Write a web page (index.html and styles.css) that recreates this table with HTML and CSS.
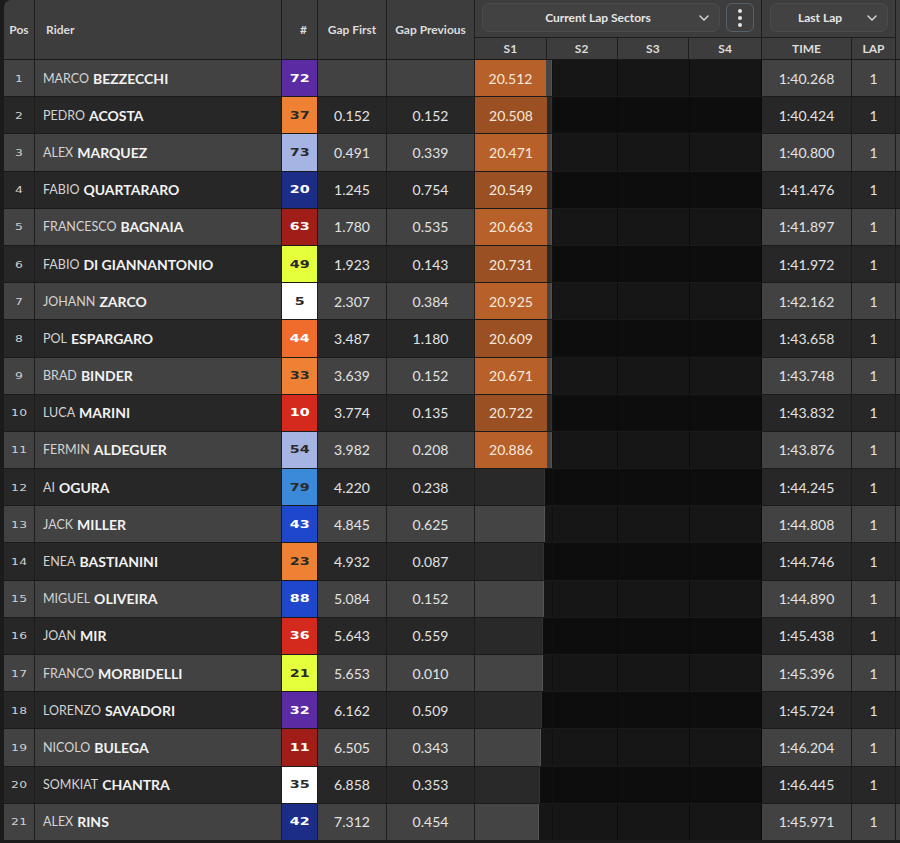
FILE: index.html
```html
<!DOCTYPE html>
<html>
<head>
<meta charset="utf-8">
<link rel="stylesheet" href="styles.css">
</head>
<body>
<div class="board">
  <div class="head">
    <div class="h pos">Pos</div>
    <div class="h rider">Rider</div>
    <div class="h num">#</div>
    <div class="h gapf">Gap First</div>
    <div class="h gapp">Gap Previous</div>
    <div class="hgroup sectors">
      <div class="htop">
        <div class="select sel-sec">Current Lap Sectors
          <svg class="chev" width="10" height="6" viewBox="0 0 10 6"><path d="M1 1l4 4 4-4" fill="none" stroke="#ddd" stroke-width="1.4" stroke-linecap="round" stroke-linejoin="round"/></svg>
        </div>
        <div class="kebab"><span></span><span></span><span></span></div>
      </div>
      <div class="hsub">
        <div class="sh w72">S1</div>
        <div class="sh w71">S2</div>
        <div class="sh w72">S3</div>
        <div class="sh w72">S4</div>
      </div>
    </div>
    <div class="hgroup laps">
      <div class="htop">
        <div class="select sel-lap">Last Lap
          <svg class="chev" width="10" height="6" viewBox="0 0 10 6"><path d="M1 1l4 4 4-4" fill="none" stroke="#ddd" stroke-width="1.4" stroke-linecap="round" stroke-linejoin="round"/></svg>
        </div>
      </div>
      <div class="hsub">
        <div class="sh w90">TIME</div>
        <div class="sh w43">LAP</div>
      </div>
    </div>
    <div class="h tail"></div>
  </div>

  <div class="rows">
    <div class="row"><div class="c pos"><span class="dg">1</span></div><div class="c rider"><span class="fn">MARCO</span><span class="ln">BEZZECCHI</span></div><div class="c num purple"><span class="dg">72</span></div><div class="c gapf"></div><div class="c gapp"></div><div class="c s1"><div class="bar" style="width:78px"><div class="fill" style="width:71px">20.512</div></div></div><div class="c sec s2"></div><div class="c sec"></div><div class="c sec"></div><div class="c time">1:40.268</div><div class="c lap">1</div><div class="c tail"></div></div>
    <div class="row"><div class="c pos"><span class="dg">2</span></div><div class="c rider"><span class="fn">PEDRO</span><span class="ln">ACOSTA</span></div><div class="c num orange dark"><span class="dg">37</span></div><div class="c gapf">0.152</div><div class="c gapp">0.152</div><div class="c s1"><div class="bar" style="width:78px"><div class="fill" style="width:72px">20.508</div></div></div><div class="c sec s2"></div><div class="c sec"></div><div class="c sec"></div><div class="c time">1:40.424</div><div class="c lap">1</div><div class="c tail"></div></div>
    <div class="row"><div class="c pos"><span class="dg">3</span></div><div class="c rider"><span class="fn">ALEX</span><span class="ln">MARQUEZ</span></div><div class="c num lav dark"><span class="dg">73</span></div><div class="c gapf">0.491</div><div class="c gapp">0.339</div><div class="c s1"><div class="bar" style="width:78px"><div class="fill" style="width:72px">20.471</div></div></div><div class="c sec s2"></div><div class="c sec"></div><div class="c sec"></div><div class="c time">1:40.800</div><div class="c lap">1</div><div class="c tail"></div></div>
    <div class="row"><div class="c pos"><span class="dg">4</span></div><div class="c rider"><span class="fn">FABIO</span><span class="ln">QUARTARARO</span></div><div class="c num navy"><span class="dg">20</span></div><div class="c gapf">1.245</div><div class="c gapp">0.754</div><div class="c s1"><div class="bar" style="width:78px"><div class="fill" style="width:72px">20.549</div></div></div><div class="c sec s2"></div><div class="c sec"></div><div class="c sec"></div><div class="c time">1:41.476</div><div class="c lap">1</div><div class="c tail"></div></div>
    <div class="row"><div class="c pos"><span class="dg">5</span></div><div class="c rider"><span class="fn">FRANCESCO</span><span class="ln">BAGNAIA</span></div><div class="c num maroon"><span class="dg">63</span></div><div class="c gapf">1.780</div><div class="c gapp">0.535</div><div class="c s1"><div class="bar" style="width:78px"><div class="fill" style="width:72px">20.663</div></div></div><div class="c sec s2"></div><div class="c sec"></div><div class="c sec"></div><div class="c time">1:41.897</div><div class="c lap">1</div><div class="c tail"></div></div>
    <div class="row"><div class="c pos"><span class="dg">6</span></div><div class="c rider"><span class="fn">FABIO</span><span class="ln">DI GIANNANTONIO</span></div><div class="c num lime dark"><span class="dg">49</span></div><div class="c gapf">1.923</div><div class="c gapp">0.143</div><div class="c s1"><div class="bar" style="width:78px"><div class="fill" style="width:72px">20.731</div></div></div><div class="c sec s2"></div><div class="c sec"></div><div class="c sec"></div><div class="c time">1:41.972</div><div class="c lap">1</div><div class="c tail"></div></div>
    <div class="row"><div class="c pos"><span class="dg">7</span></div><div class="c rider"><span class="fn">JOHANN</span><span class="ln">ZARCO</span></div><div class="c num white dark"><span class="dg">5</span></div><div class="c gapf">2.307</div><div class="c gapp">0.384</div><div class="c s1"><div class="bar" style="width:78px"><div class="fill" style="width:72px">20.925</div></div></div><div class="c sec s2"></div><div class="c sec"></div><div class="c sec"></div><div class="c time">1:42.162</div><div class="c lap">1</div><div class="c tail"></div></div>
    <div class="row"><div class="c pos"><span class="dg">8</span></div><div class="c rider"><span class="fn">POL</span><span class="ln">ESPARGARO</span></div><div class="c num orange2"><span class="dg">44</span></div><div class="c gapf">3.487</div><div class="c gapp">1.180</div><div class="c s1"><div class="bar" style="width:78px"><div class="fill" style="width:72px">20.609</div></div></div><div class="c sec s2"></div><div class="c sec"></div><div class="c sec"></div><div class="c time">1:43.658</div><div class="c lap">1</div><div class="c tail"></div></div>
    <div class="row"><div class="c pos"><span class="dg">9</span></div><div class="c rider"><span class="fn">BRAD</span><span class="ln">BINDER</span></div><div class="c num orange dark"><span class="dg">33</span></div><div class="c gapf">3.639</div><div class="c gapp">0.152</div><div class="c s1"><div class="bar" style="width:78px"><div class="fill" style="width:72px">20.671</div></div></div><div class="c sec s2"></div><div class="c sec"></div><div class="c sec"></div><div class="c time">1:43.748</div><div class="c lap">1</div><div class="c tail"></div></div>
    <div class="row"><div class="c pos"><span class="dg">10</span></div><div class="c rider"><span class="fn">LUCA</span><span class="ln">MARINI</span></div><div class="c num red"><span class="dg">10</span></div><div class="c gapf">3.774</div><div class="c gapp">0.135</div><div class="c s1"><div class="bar" style="width:78px"><div class="fill" style="width:72px">20.722</div></div></div><div class="c sec s2"></div><div class="c sec"></div><div class="c sec"></div><div class="c time">1:43.832</div><div class="c lap">1</div><div class="c tail"></div></div>
    <div class="row"><div class="c pos"><span class="dg">11</span></div><div class="c rider"><span class="fn">FERMIN</span><span class="ln">ALDEGUER</span></div><div class="c num lav dark"><span class="dg">54</span></div><div class="c gapf">3.982</div><div class="c gapp">0.208</div><div class="c s1"><div class="bar" style="width:78px"><div class="fill" style="width:72px">20.886</div></div></div><div class="c sec s2"></div><div class="c sec"></div><div class="c sec"></div><div class="c time">1:43.876</div><div class="c lap">1</div><div class="c tail"></div></div>
    <div class="row"><div class="c pos"><span class="dg">12</span></div><div class="c rider"><span class="fn">AI</span><span class="ln">OGURA</span></div><div class="c num sky dark"><span class="dg">79</span></div><div class="c gapf">4.220</div><div class="c gapp">0.238</div><div class="c s1"><div class="bar" style="width:70px"></div></div><div class="c sec s2"></div><div class="c sec"></div><div class="c sec"></div><div class="c time">1:44.245</div><div class="c lap">1</div><div class="c tail"></div></div>
    <div class="row"><div class="c pos"><span class="dg">13</span></div><div class="c rider"><span class="fn">JACK</span><span class="ln">MILLER</span></div><div class="c num blue"><span class="dg">43</span></div><div class="c gapf">4.845</div><div class="c gapp">0.625</div><div class="c s1"><div class="bar" style="width:70px"></div></div><div class="c sec s2"></div><div class="c sec"></div><div class="c sec"></div><div class="c time">1:44.808</div><div class="c lap">1</div><div class="c tail"></div></div>
    <div class="row"><div class="c pos"><span class="dg">14</span></div><div class="c rider"><span class="fn">ENEA</span><span class="ln">BASTIANINI</span></div><div class="c num orange dark"><span class="dg">23</span></div><div class="c gapf">4.932</div><div class="c gapp">0.087</div><div class="c s1"><div class="bar" style="width:69px"></div></div><div class="c sec s2"></div><div class="c sec"></div><div class="c sec"></div><div class="c time">1:44.746</div><div class="c lap">1</div><div class="c tail"></div></div>
    <div class="row"><div class="c pos"><span class="dg">15</span></div><div class="c rider"><span class="fn">MIGUEL</span><span class="ln">OLIVEIRA</span></div><div class="c num blue"><span class="dg">88</span></div><div class="c gapf">5.084</div><div class="c gapp">0.152</div><div class="c s1"><div class="bar" style="width:69px"></div></div><div class="c sec s2"></div><div class="c sec"></div><div class="c sec"></div><div class="c time">1:44.890</div><div class="c lap">1</div><div class="c tail"></div></div>
    <div class="row"><div class="c pos"><span class="dg">16</span></div><div class="c rider"><span class="fn">JOAN</span><span class="ln">MIR</span></div><div class="c num red"><span class="dg">36</span></div><div class="c gapf">5.643</div><div class="c gapp">0.559</div><div class="c s1"><div class="bar" style="width:68px"></div></div><div class="c sec s2"></div><div class="c sec"></div><div class="c sec"></div><div class="c time">1:45.438</div><div class="c lap">1</div><div class="c tail"></div></div>
    <div class="row"><div class="c pos"><span class="dg">17</span></div><div class="c rider"><span class="fn">FRANCO</span><span class="ln">MORBIDELLI</span></div><div class="c num lime dark"><span class="dg">21</span></div><div class="c gapf">5.653</div><div class="c gapp">0.010</div><div class="c s1"><div class="bar" style="width:68px"></div></div><div class="c sec s2"></div><div class="c sec"></div><div class="c sec"></div><div class="c time">1:45.396</div><div class="c lap">1</div><div class="c tail"></div></div>
    <div class="row"><div class="c pos"><span class="dg">18</span></div><div class="c rider"><span class="fn">LORENZO</span><span class="ln">SAVADORI</span></div><div class="c num purple"><span class="dg">32</span></div><div class="c gapf">6.162</div><div class="c gapp">0.509</div><div class="c s1"><div class="bar" style="width:67px"></div></div><div class="c sec s2"></div><div class="c sec"></div><div class="c sec"></div><div class="c time">1:45.724</div><div class="c lap">1</div><div class="c tail"></div></div>
    <div class="row"><div class="c pos"><span class="dg">19</span></div><div class="c rider"><span class="fn">NICOLO</span><span class="ln">BULEGA</span></div><div class="c num maroon"><span class="dg">11</span></div><div class="c gapf">6.505</div><div class="c gapp">0.343</div><div class="c s1"><div class="bar" style="width:66px"></div></div><div class="c sec s2"></div><div class="c sec"></div><div class="c sec"></div><div class="c time">1:46.204</div><div class="c lap">1</div><div class="c tail"></div></div>
    <div class="row"><div class="c pos"><span class="dg">20</span></div><div class="c rider"><span class="fn">SOMKIAT</span><span class="ln">CHANTRA</span></div><div class="c num white dark"><span class="dg">35</span></div><div class="c gapf">6.858</div><div class="c gapp">0.353</div><div class="c s1"><div class="bar" style="width:65px"></div></div><div class="c sec s2"></div><div class="c sec"></div><div class="c sec"></div><div class="c time">1:46.445</div><div class="c lap">1</div><div class="c tail"></div></div>
    <div class="row"><div class="c pos"><span class="dg">21</span></div><div class="c rider"><span class="fn">ALEX</span><span class="ln">RINS</span></div><div class="c num navy"><span class="dg">42</span></div><div class="c gapf">7.312</div><div class="c gapp">0.454</div><div class="c s1"><div class="bar" style="width:64px"></div></div><div class="c sec s2"></div><div class="c sec"></div><div class="c sec"></div><div class="c time">1:45.971</div><div class="c lap">1</div><div class="c tail"></div></div>
  </div>
</div>
</body>
</html>
```

FILE: styles.css
```css
* { box-sizing: border-box; }
html, body { margin: 0; padding: 0; }
body {
  background: #1b1b1b;
  font-family: "Lato", "Open Sans", sans-serif;
  color: #e4e4e4;
  width: 900px;
  height: 843px;
  overflow: hidden;
}
.board {
  margin-left: 4px;
  width: 896px;
  border-top-left-radius: 7px;
  overflow: hidden;
  background: #1b1b1b;
}

/* ---------- header ---------- */
.head {
  display: flex;
  height: 60px;
  background: #3d3d3d;
  border-bottom: 1px solid #1a1a1a;
}
.h {
  display: flex;
  align-items: center;
  font-size: 12px;
  font-weight: 700;
  color: #dcdcdc;
  border-right: 1px solid #1e1e1e;
}
.pos { width: 31px; justify-content: center; }
.rider { width: 247px; }
.h.rider { padding-left: 11px; }
.num { width: 36px; }
.h.num { justify-content: flex-end; padding-right: 10px; }
.gapf { width: 69px; justify-content: center; }
.gapp { width: 88px; justify-content: center; }
.tail { width: 5px; border-right: none; }
.h.tail { border-left: 1px solid #1e1e1e; border-right: none; }

.hgroup {
  display: flex;
  flex-direction: column;
  border-right: 1px solid #1e1e1e;
}
.sectors { width: 287px; }
.laps { width: 133px; border-right: none; }
.htop {
  height: 38px;
  border-bottom: 1px solid #1e1e1e;
  display: flex;
  align-items: flex-start;
  padding-top: 3px;
}
.sectors .htop { padding-left: 7px; gap: 6px; }
.laps .htop { padding-left: 8px; }
.select {
  position: relative;
  height: 29px;
  border: 1px solid #4c4c4c;
  border-radius: 7px;
  background: #424242;
  display: flex;
  align-items: center;
  justify-content: center;
  font-size: 12px;
  font-weight: 700;
  color: #e6e6e6;
}
.sel-sec { width: 238px; padding-right: 6px; }
.sel-lap { width: 118px; padding-right: 18px; }
.chev { position: absolute; right: 10px; top: 11px; }
.kebab {
  width: 28px;
  height: 29px;
  border: 1px solid #56606b;
  border-radius: 6px;
  background: #3f3f3f;
  display: flex;
  flex-direction: column;
  align-items: center;
  justify-content: center;
  gap: 3px;
}
.kebab span {
  width: 4px;
  height: 4px;
  border-radius: 50%;
  background: #e6e6e6;
}
.hsub { display: flex; height: 21px; }
.sh {
  display: flex;
  align-items: center;
  justify-content: center;
  font-size: 12px;
  font-weight: 700;
  color: #dcdcdc;
  border-right: 1px solid #1e1e1e;
}
.sh:last-child { border-right: none; }
.w72 { width: 72px; }
.w71 { width: 71px; }
.w90 { width: 90px; }
.w43 { width: 43px; border-right: none; }
.laps .sh.w90 { border-right: 1px solid #1e1e1e; }

/* ---------- rows ---------- */
.row {
  display: flex;
  height: 37.2px;
  background: #424242;
  border-bottom: 1px solid #1a1a1a;
}
.row:nth-child(even) { background: #272727; }
.c {
  display: flex;
  align-items: center;
  border-right: 1px solid #1d1d1d;
  font-size: 14px;
  color: #e2e2e2;
}
.c.pos { justify-content: center; }
.c.rider { padding-left: 8px; }
.fn { font-size: 12.5px; font-weight: 400; color: #d4d4d4; }
.ln { font-size: 14px; font-weight: 700; color: #f2f2f2; margin-left: 4px; }
.dg {
  display: inline-block;
  font-family: "DejaVu Sans", sans-serif;
  font-weight: 700;
  transform: scaleX(1.3);
}
.c.pos .dg { font-size: 9.5px; font-weight: 400; color: #cfcfcf; letter-spacing: 0.3px; }
.c.num { justify-content: center; }
.c.num .dg { font-size: 11px; color: #fff; letter-spacing: 0.2px; }
.c.num.dark .dg { color: #2a2a2a; }
.purple { background: #5a2ba3; }
.orange { background: #ef8134; }
.orange2 { background: #f06c2c; }
.lav { background: #a5b4e2; }
.navy { background: #1c2d88; }
.maroon { background: #a01d18; }
.lime { background: #e6ff3c; }
.white { background: #ffffff; }
.red { background: #d42a1e; }
.sky { background: #3b8ad9; }
.blue { background: #1f47cc; }

.c.gapf, .c.gapp { justify-content: center; }
.c.s1 {
  width: 78px;
  background: #161616;
  align-items: stretch;
  border-right: 1px solid #101010;
}
.row:nth-child(even) .c.s1 { background: #0d0d0d; }
.bar {
  background: #444444;
  border-right: 1px solid #555;
  display: flex;
  align-items: stretch;
}
.row:nth-child(even) .bar { background: #292929; border-right-color: #333; }
.fill {
  background: #b8602a;
  display: flex;
  align-items: center;
  justify-content: center;
  color: #f6e9dc;
  font-size: 14px;
}
.row:nth-child(even) .fill { background: #9b5024; }
.c.sec {
  width: 72px;
  background: #161616;
  border-right: 1px solid #0a0a0a;
}
.c.sec.s2 { width: 65px; }
.row:nth-child(even) .c.sec { background: #0d0d0d; }
.c.time { width: 90px; justify-content: center; }
.c.lap { width: 43px; justify-content: center; border-right: none; }
.c.tail { width: 5px; border-right: none; border-left: 1px solid #1d1d1d; }
```
